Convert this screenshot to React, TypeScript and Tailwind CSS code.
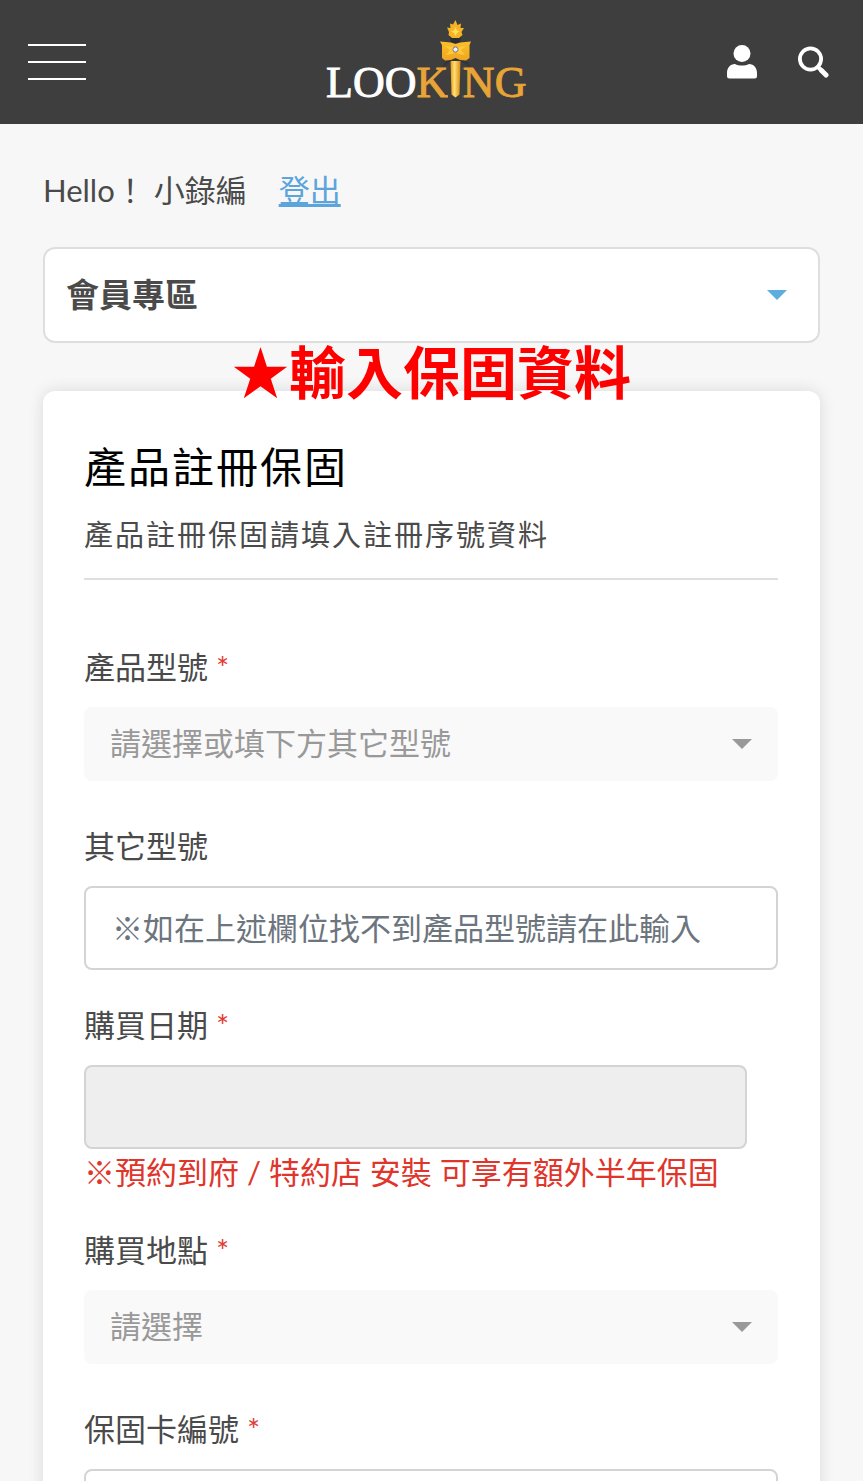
import React from 'react';

interface FieldProps {
  id: string;
  label: string;
  required?: boolean;
  note?: string;
  children: React.ReactNode;
}

const inputClass =
  'block h-[84px] rounded-lg border-2 border-[#d4d4d4] px-[26px] text-[31px] text-[#4a4a4a] placeholder:text-[#6c757d] placeholder:opacity-100 outline-none';

const Logo = () => (
  <svg width="212" height="100" viewBox="-2 -8 212 100" role="img" aria-label="LOOKING">
    <defs>
      <linearGradient id="torch" x1="0" x2="1" y1="0" y2="0">
        <stop offset="0" stopColor="#e89a1c" />
        <stop offset="0.4" stopColor="#ffe071" />
        <stop offset="1" stopColor="#d98a12" />
      </linearGradient>
      <linearGradient id="book" x1="0" x2="0" y1="0" y2="1">
        <stop offset="0" stopColor="#fbc02a" />
        <stop offset="1" stopColor="#efa51f" />
      </linearGradient>
    </defs>
    <text x="1" y="77" fontSize="44" className="font-['Liberation_Serif',serif]">
      <tspan fill="#ffffff" stroke="#ffffff" strokeWidth="0.9">LOO</tspan>
      <tspan fill="#e8a436" stroke="#e8a436" strokeWidth="0.9">KING</tspan>
    </text>
    {/* torch handle, stands in front of the I */}
    <path d="M123 40h14v38h-14z" fill="#3e3e3e" />
    <path d="M125.500 40h10l-1 34.500-4 3-4-3z" fill="url(#torch)" />
    <path d="M119 43l7-5h9l9 5 1 4-5-3-4-3h-10l-4 3-4 3z" fill="#33343c" />
    <path d="M125 16h11l-1 7h-9z" fill="#2c2c34" />
    {/* open book */}
    <path d="M115 21.500l11 1 4.500 1.500 4.500-1.500 11-1-1.500 3.500v13l-3.500 2.500-6-.5-4.500-2-4.500 2-6 .5-3-2.500V25z" fill="url(#book)" />
    <path d="M120 26l8 1 2.500 2 2.500-2 8-1-5 4 4 5-6-1-3.500-2-3.500 2-6 1 4-5z" fill="#ffc93a" />
    <circle cx="130.500" cy="29.500" r="2.600" fill="#eef0f8" stroke="#77748c" strokeWidth="1" />
    {/* flame */}
    <path d="M130.500 0l2 5 3.500-1.500-.5 4.500 3.500 0-2.500 4 1 3-3.500 3h-7l-3.500-3 .5-3-2-4.500 3.500.5-.5-4.500 3 1z" fill="#f5b325" />
    <path d="M130.500 7l1.500 3.500 3 .5-3 2-1.500 3-1.500-3-3-1.500 3-1z" fill="#ffdf55" />
  </svg>
);

const Header = () => (
  <header className="grid h-[124px] shrink-0 grid-cols-[1fr_auto_1fr] items-center bg-[#3e3e3e] pr-[34px] pl-7">
    <button type="button" aria-label="選單" className="flex w-[58px] flex-col gap-[15px]">
      <span className="h-0.5 w-full bg-white" />
      <span className="h-0.5 w-full bg-white" />
      <span className="h-0.5 w-full bg-white" />
    </button>
    <a href="#" aria-label="LOOKING">
      <Logo />
    </a>
    <div className="flex items-center gap-10 justify-self-end">
      <button type="button" aria-label="會員">
        <svg width="30" height="34" viewBox="0 0 30 34" fill="#ffffff">
          <circle cx="15" cy="8.500" r="8.500" />
          <path d="M8 19c2 1 4.500 1.500 7 1.500s5-.5 7-1.500c5 0 8 4 8 9v3a2.500 2.500 0 0 1-2.500 2.500h-25A2.500 2.500 0 0 1 0 31v-3c0-5 3-9 8-9z" />
        </svg>
      </button>
      <button type="button" aria-label="搜尋">
        <svg width="32" height="32" viewBox="0 0 32 32" fill="none" stroke="#ffffff" strokeLinecap="round">
          <circle cx="13.500" cy="13" r="10.600" strokeWidth="3.800" />
          <path d="M21 21l2 2" strokeWidth="4" />
          <path d="M24.500 24.500l4.500 4.500" strokeWidth="5" />
        </svg>
      </button>
    </div>
  </header>
);

const Caret = ({ className }: { className: string }) => (
  <svg width="20" height="10" viewBox="0 0 20 10" className={className} fill="currentColor" aria-hidden="true">
    <path d="M0 0h20l-10 10z" />
  </svg>
);

const Field = ({ id, label, required, note, children }: FieldProps) => (
  <div>
    <label htmlFor={id} className="mb-5 block text-[31px] leading-10">
      {label}
      {required && <span className="ml-2 text-[#e03c31]">*</span>}
    </label>
    {children}
    {note && <p className="text-[31px] leading-[46px] text-[#e0352b]">{note}</p>}
  </div>
);

const Select = ({ id, placeholder }: { id: string; placeholder: string }) => (
  <div className="relative mb-2.5">
    <select
      id={id}
      defaultValue=""
      className="block h-[74px] w-full appearance-none rounded-lg bg-[#f9f9f9] px-[26px] pb-0.5 text-[31px] text-[#999999] outline-none"
    >
      <option value="">{placeholder}</option>
    </select>
    <Caret className="pointer-events-none absolute top-8 right-[26px] text-[#999999]" />
  </div>
);

export default function App() {
  return (
    <div className="flex h-screen flex-col overflow-hidden bg-[#f7f7f7] font-['Lato','Noto_Sans_CJK_TC',sans-serif] text-[#4a4a4a]">
      <Header />

      <main className="px-[43px] pt-[42px]">
        <div className="mb-[33px] flex gap-8 text-[31px] leading-[48px]">
          <span>Hello！ 小錄編</span>
          <a href="#" className="text-[#5ba4dc] underline">
            登出
          </a>
        </div>

        <button
          type="button"
          aria-expanded="false"
          className="flex h-24 w-full items-center justify-between rounded-xl border-2 border-[#dedede] bg-white pr-[31px] pl-[21px] text-[33px] font-bold"
        >
          會員專區
          <Caret className="text-[#5baedd]" />
        </button>

        <p className="relative z-10 flex h-12 items-center justify-center pt-2.5 text-[57px] leading-none font-bold whitespace-nowrap text-[#ff0000]">
          ★輸入保固資料
        </p>

        <section className="rounded-xl bg-white px-[41px] pt-[46px] pr-[42px] pb-10 shadow-[0_0_16px_rgba(0,0,0,0.12)]">
          <div className="mb-[67px] border-b-2 border-[#dfdfdf] pb-[21px]">
            <h1 className="text-[42px] leading-[60px] tracking-[2px] text-black">產品註冊保固</h1>
            <p className="pt-4 text-[29px] leading-[44px] tracking-[2px]">產品註冊保固請填入註冊序號資料</p>
          </div>

          <form className="flex flex-col gap-[35px]">
            <Field id="model" label="產品型號" required>
              <Select id="model" placeholder="請選擇或填下方其它型號" />
            </Field>
            <Field id="other-model" label="其它型號">
              <input
                id="other-model"
                type="text"
                placeholder="※如在上述欄位找不到產品型號請在此輸入"
                className={`${inputClass} w-full bg-white`}
              />
            </Field>
            <Field id="date" label="購買日期" required note="※預約到府 / 特約店 安裝 可享有額外半年保固">
              <input id="date" type="text" readOnly className={`${inputClass} w-[calc(100%-31px)] bg-[#eeeeee]`} />
            </Field>
            <Field id="place" label="購買地點" required>
              <Select id="place" placeholder="請選擇" />
            </Field>
            <Field id="card-number" label="保固卡編號" required>
              <input id="card-number" type="text" className={`${inputClass} w-full bg-white`} />
            </Field>
          </form>
        </section>
      </main>
    </div>
  );
}
